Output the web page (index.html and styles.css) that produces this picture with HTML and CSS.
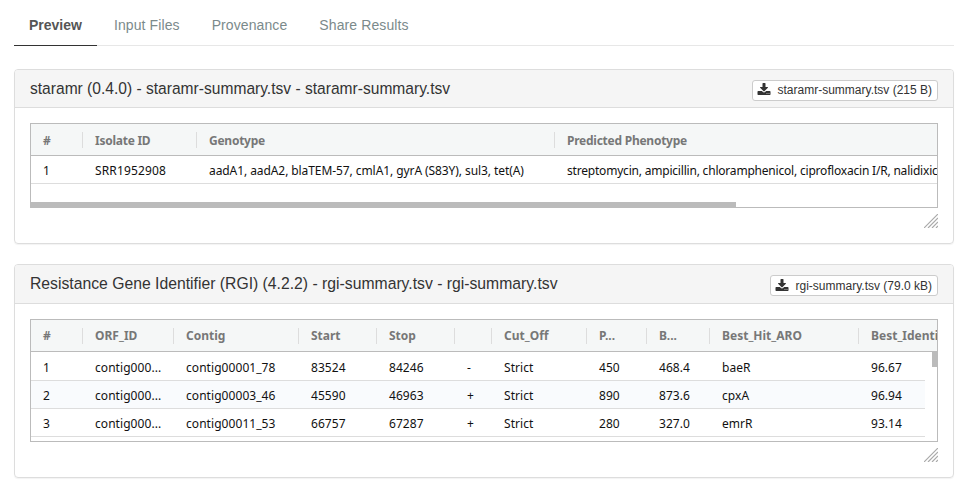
FILE: index.html
```html
<!DOCTYPE html>
<html lang="en">
<head>
  <meta charset="UTF-8" />
  <title>Preview</title>
  <link rel="stylesheet" href="styles.css">
</head>
<body>
  <ul class="tabs">
    <li class="tab active">Preview</li>
    <li class="tab">Input Files</li>
    <li class="tab">Provenance</li>
    <li class="tab">Share Results</li>
  </ul>

  <div class="panel">
    <div class="panel-head head-first">
      <h3 class="panel-title">staramr (0.4.0) - staramr-summary.tsv - staramr-summary.tsv</h3>
      <a class="download">
        <svg class="download-icon" viewBox="0 0 1792 1792"><path d="M1344 1344q0-26-19-45t-45-19-45 19-19 45 19 45 45 19 45-19 19-45zm256 0q0-26-19-45t-45-19-45 19-19 45 19 45 45 19 45-19 19-45zm128-224v320q0 40-28 68t-68 28h-1472q-40 0-68-28t-28-68v-320q0-40 28-68t68-28h465l135 136q58 56 136 56t136-56l136-136h464q40 0 68 28t28 68zm-325-569q17 41-14 70l-448 448q-18 19-45 19t-45-19l-448-448q-31-29-14-70 17-39 59-39h256v-448q0-26 19-45t45-19h256q26 0 45 19t19 45v448h256q42 0 59 39z"/></svg>
        staramr-summary.tsv (215 B)
      </a>
    </div>
    <div class="panel-body">
      <div class="frame frame-small">
        <table class="grid grid-staramr">
          <colgroup><col class="w52"><col class="w114"><col class="w358"><col class="w800"></colgroup>
          <thead>
            <tr><th>#</th><th>Isolate ID</th><th>Genotype</th><th>Predicted Phenotype</th></tr>
          </thead>
          <tbody>
            <tr>
              <td>1</td>
              <td class="isolate">SRR1952908</td>
              <td>aadA1, aadA2, blaTEM-57, cmlA1, gyrA (S83Y), sul3, tet(A)</td>
              <td>streptomycin, ampicillin, chloramphenicol, ciprofloxacin I/R, nalidixic acid, tetracycline</td>
            </tr>
          </tbody>
        </table>
        <div class="thumb-h"></div>
      </div>
      <div class="resize-row">
        <svg class="resize" viewBox="0 0 14 14"><path d="M0 14L14 0M4 14L14 4M8 14L14 8M12 14L14 12"/></svg>
      </div>
    </div>
  </div>

  <div class="panel">
    <div class="panel-head">
      <h3 class="panel-title">Resistance Gene Identifier (RGI) (4.2.2) - rgi-summary.tsv - rgi-summary.tsv</h3>
      <a class="download">
        <svg class="download-icon" viewBox="0 0 1792 1792"><path d="M1344 1344q0-26-19-45t-45-19-45 19-19 45 19 45 45 19 45-19 19-45zm256 0q0-26-19-45t-45-19-45 19-19 45 19 45 45 19 45-19 19-45zm128-224v320q0 40-28 68t-68 28h-1472q-40 0-68-28t-28-68v-320q0-40 28-68t68-28h465l135 136q58 56 136 56t136-56l136-136h464q40 0 68 28t28 68zm-325-569q17 41-14 70l-448 448q-18 19-45 19t-45-19l-448-448q-31-29-14-70 17-39 59-39h256v-448q0-26 19-45t45-19h256q26 0 45 19t19 45v448h256q42 0 59 39z"/></svg>
        rgi-summary.tsv (79.0 kB)
      </a>
    </div>
    <div class="panel-body">
      <div class="frame frame-large">
        <table class="grid grid-rgi">
          <colgroup>
            <col class="w52"><col class="w91"><col class="w125"><col class="w78"><col class="w78"><col class="w37"><col class="w95"><col class="w60"><col class="w63"><col class="w149"><col class="w120">
          </colgroup>
          <thead>
            <tr>
              <th>#</th><th>ORF_ID</th><th>Contig</th><th>Start</th><th>Stop</th><th></th><th>Cut_Off</th><th>P...</th><th>B...</th><th>Best_Hit_ARO</th><th>Best_Identities</th>
            </tr>
          </thead>
        </table>
        <div class="rows-clip">
          <table class="grid grid-rgi">
            <colgroup>
              <col class="w52"><col class="w91"><col class="w125"><col class="w78"><col class="w78"><col class="w37"><col class="w95"><col class="w60"><col class="w63"><col class="w149"><col class="w120">
            </colgroup>
            <tbody>
              <tr><td>1</td><td>contig000...</td><td>contig00001_78</td><td>83524</td><td>84246</td><td>-</td><td>Strict</td><td>450</td><td>468.4</td><td>baeR</td><td>96.67</td></tr>
              <tr><td>2</td><td>contig000...</td><td>contig00003_46</td><td>45590</td><td>46963</td><td>+</td><td>Strict</td><td>890</td><td>873.6</td><td>cpxA</td><td>96.94</td></tr>
              <tr><td>3</td><td>contig000...</td><td>contig00011_53</td><td>66757</td><td>67287</td><td>+</td><td>Strict</td><td>280</td><td>327.0</td><td>emrR</td><td>93.14</td></tr>
            </tbody>
          </table>
        </div>
        <div class="thumb-v"></div>
      </div>
      <div class="resize-row">
        <svg class="resize" viewBox="0 0 14 14"><path d="M0 14L14 0M4 14L14 4M8 14L14 8M12 14L14 12"/></svg>
      </div>
    </div>
  </div>
</body>
</html>
```

FILE: styles.css
```css
body {
  margin: 0;
  padding: 5px 12px 0 14px;
  font-family: "Liberation Sans", Arial, sans-serif;
  font-size: 14px;
  color: #333;
  background: #fff;
}

.tabs {
  display: flex;
  gap: 2px;
  list-style: none;
  margin: 0 0 23px;
  padding: 0;
  border-bottom: 1px solid #e7e7e7;
}

.tab {
  padding: 10px 15px;
  line-height: 20px;
  letter-spacing: 0.1px;
  color: #7b8a8b;
}

.tab.active {
  font-weight: bold;
  letter-spacing: 0;
  color: #555;
  box-shadow: 0 1px 0 #333;
}

.panel {
  margin-bottom: 20px;
  border: 1px solid #ddd;
  border-radius: 4px;
  box-shadow: 0 1px 1px rgba(0,0,0,0.05);
}

.panel-head {
  display: flex;
  justify-content: space-between;
  align-items: center;
  height: 38px;
  padding: 0 15px;
  background: #f5f5f5;
  border-bottom: 1px solid #ddd;
  border-radius: 3px 3px 0 0;
}

.head-first {
  height: 37px;
}

.panel-title {
  margin: 0;
  font-size: 15.74px;
  font-weight: normal;
}

.head-first .panel-title {
  font-size: 15.58px;
}

.download {
  display: flex;
  align-items: center;
  gap: 7px;
  box-sizing: border-box;
  height: 21px;
  margin-top: 3px;
  padding: 0 5px 0 4px;
  font-size: 12px;
  color: #333;
  background: #fff;
  border: 1px solid #ccc;
  border-radius: 3px;
}

.download-icon {
  width: 14px;
  height: 14px;
  fill: #333;
}

.panel-body {
  padding: 15px;
}

.frame {
  position: relative;
  box-sizing: border-box;
  overflow: hidden;
  border: 1px solid #bbb;
}

.frame-small {
  height: 85px;
}

.frame-large {
  height: 123px;
}

.grid {
  table-layout: fixed;
  width: max-content;
  border-collapse: separate;
  border-spacing: 0;
  font-family: "Noto Sans", sans-serif;
  font-size: 12px;
}

.grid th,
.grid td {
  box-sizing: border-box;
  padding: 0 12px;
  overflow: hidden;
  white-space: nowrap;
  text-align: left;
}

.grid th {
  position: relative;
  height: 32px;
  color: #777;
  background: #f5f7f7;
  border-bottom: 1px solid #bbb;
}

.grid th::after {
  content: "";
  position: absolute;
  top: 8px;
  right: 0;
  height: 16px;
  border-right: 1px solid #ddd;
}

.grid td {
  height: 28px;
  padding-top: 2px;
  color: #111;
  border-bottom: 1px solid #ddd;
}

.grid-staramr th {
  padding-top: 2px;
  letter-spacing: -0.25px;
}

.grid-staramr td {
  letter-spacing: -0.08px;
}

.grid-staramr td:last-child {
  letter-spacing: -0.2px;
}

.grid-staramr .isolate {
  letter-spacing: 0.15px;
}

.grid-rgi td {
  letter-spacing: 0.06px;
}

.grid-rgi tbody tr:first-child td {
  height: 29px;
}

.grid tbody tr:nth-child(even) td {
  background: #f9fbfd;
}

.w37 { width: 37px; }
.w52 { width: 52px; }
.w60 { width: 60px; }
.w63 { width: 63px; }
.w78 { width: 78px; }
.w91 { width: 91px; }
.w95 { width: 95px; }
.w114 { width: 114px; }
.w120 { width: 120px; }
.w125 { width: 125px; }
.w149 { width: 149px; }
.w358 { width: 358px; }
.w800 { width: 800px; }

.rows-clip {
  width: 894px;
  overflow: hidden;
}

.thumb-h {
  position: absolute;
  left: 0;
  bottom: 0;
  width: 705px;
  height: 5px;
  background: #bbb;
}

.thumb-v {
  position: absolute;
  top: 32px;
  right: 0;
  width: 5px;
  height: 15px;
  background: #bbb;
}

.resize-row {
  display: flex;
  justify-content: flex-end;
  margin-top: 6px;
}

.resize {
  display: block;
  width: 14px;
  height: 14px;
  fill: none;
  stroke: #aaa;
  stroke-width: 1.2;
}
```
